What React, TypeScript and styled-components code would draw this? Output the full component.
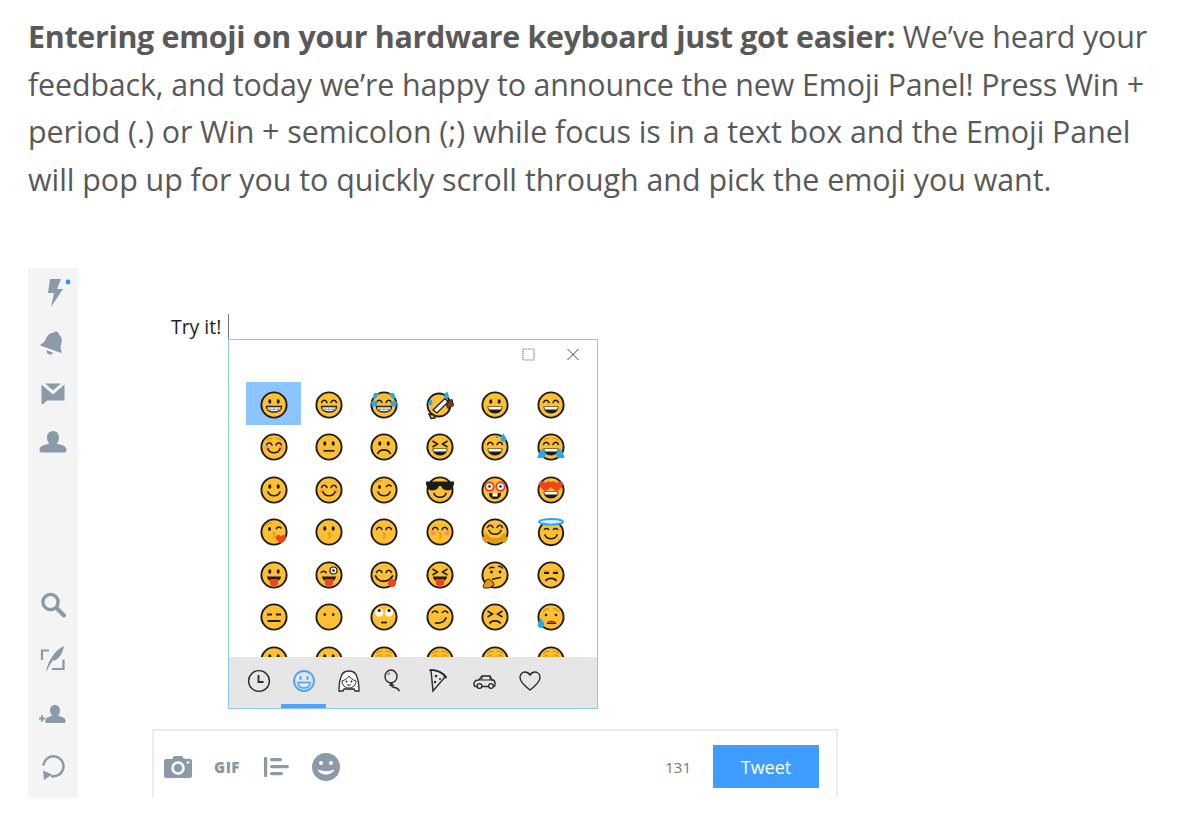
import React from "react";
import styled, { createGlobalStyle } from "styled-components";

const Global = createGlobalStyle`
  html, body { margin: 0; padding: 0; background: #fff; }
  body { font-family: "Open Sans", "Noto Sans", sans-serif; }
`;
const Page = styled.div`
  width: 1200px; height: 828px; overflow: hidden; box-sizing: border-box;
  padding: 13px 0 0 28px; background: #fff;
`;
const Intro = styled.p`
  margin: 0; font-size: 30.4px; line-height: 47.7px; color: #595959; white-space: nowrap;
`;
const Line = styled.span<{ $track: number }>`display: block; letter-spacing: ${(p) => p.$track}px;`;
const Lead = styled.strong`font-weight: 700; letter-spacing: -0.3px;`;
const Stage = styled.div`display: flex; margin-top: 64.2px; height: 530px;`;
const Rail = styled.nav`
  width: 50px; background: #f4f4f4; display: flex; flex-direction: column; padding-bottom: 4px; box-sizing: border-box;
`;
const RailGroup = styled.div`display: flex; flex-direction: column; &:last-child { margin-top: auto; }`;
const RailSlot = styled.div<{ $h: number }>`
  height: ${(p) => p.$h}px; display: flex; align-items: center; justify-content: center;
`;
const Main = styled.div`width: 686px; margin-left: 74px; display: flex; flex-direction: column;`;
const TryRow = styled.div`
  height: 71px; box-sizing: border-box; padding-top: 46px; display: flex; align-items: flex-start;
`;
const TryText = styled.span`
  width: 76px; box-sizing: border-box; padding: 0 0 0 19px; font-size: 19.4px; line-height: 26px; color: #222; white-space: nowrap;
`;
const Caret = styled.span`width: 1px; height: 26px; background: #777;`;
const Panel = styled.section`
  width: 370px; height: 370px; margin-left: 76px; box-sizing: border-box; border: 1px solid #8cc4ff;
  display: flex; flex-direction: column; background: #fff;
`;
const TitleBar = styled.div`
  height: 42px; flex: none; display: flex; justify-content: flex-end; align-items: flex-start; gap: 28px;
  padding: 8px 17px 0 0; box-sizing: border-box;
`;
const EmojiGrid = styled.div`
  flex: 1; overflow: hidden; padding-left: 17px; display: grid; grid-template-columns: repeat(6, 55.4px);
  grid-auto-rows: 42.5px; align-content: start;
`;
const Cell = styled.div<{ $on?: boolean }>`
  display: flex; align-items: center; justify-content: center; padding-top: 3px; box-sizing: border-box;
  background: ${(p) => (p.$on ? "#8cc4ff" : "transparent")};
`;
const TabBar = styled.div`
  height: 51px; flex: none; background: #e6e6e6; display: flex; padding-left: 7px;
`;
const Tab = styled.div<{ $on?: boolean }>`
  width: 45.2px; box-sizing: border-box; display: flex; justify-content: center; align-items: flex-start; padding-top: 12px;
  border-bottom: 4px solid ${(p) => (p.$on ? "#4da3ff" : "transparent")};
`;
const Composer = styled.div`
  margin-top: 20px; height: 68px; box-sizing: border-box; border: solid #e9edf1; border-width: 2px 2px 0 2px;
  padding: 14px 17px 0 9px; display: flex; align-items: flex-start;
`;
const Tools = styled.div`display: flex; align-items: center; height: 43px;`;
const ToolSlot = styled.div<{ $w: number }>`width: ${(p) => p.$w}px; display: flex; justify-content: center; align-items: center;`;
const Gif = styled.span`font-size: 15px; font-weight: 800; color: #8899a6; letter-spacing: .5px;`;
const Count = styled.span`margin-left: auto; font-size: 15px; line-height: 44px; color: #777; margin-right: 22px;`;
const TweetBtn = styled.button`
  width: 106px; height: 43px; border: 0; padding: 0; background: #3f9dff; color: #fff; font: 400 18px "Open Sans", sans-serif;
`;

const G = "#8a9aa8";
const Ic = ({ w = 28, h = 28, children, vb }: any) => (
  <svg width={w} height={h} viewBox={vb || `0 0 ${w} ${h}`} style={{ display: "block" }}>{children}</svg>
);

const Bolt = () => (
  <Ic w={50} h={40} vb="0 0 50 40">
    <path d="M22 6h11l-4 10h6L23 34l3-14h-6z" fill={G} />
    <circle cx="40" cy="9" r="2.4" fill="#2f8fff" />
  </Ic>
);
const Bell = () => (
  <Ic w={30} h={30}>
    <g fill={G} transform="rotate(20 15 15)">
      <path d="M15 3c1.6 0 2.400 1 2.600 2 3.800 1 5.400 4.600 5.400 8.400 0 3.400 1.600 5 3 6.600v1.600H4v-1.600c1.400-1.600 3-3.200 3-6.600 0-3.800 1.600-7.400 5.400-8.400.2-1 1-2 2.600-2z" />
      <path d="M11.500 24h7c-.4 2-1.800 3-3.500 3s-3.100-1-3.500-3z" />
    </g>
  </Ic>
);
const Mail = () => (
  <Ic w={26} h={24}>
    <path d="M1.500 3.500L13 13.500 24.500 3.500V19.500H7l-3.800 3.400-1.700.2z" fill={G} />
    <path d="M5 2.500h16l-8 6.800z" fill={G} />
  </Ic>
);
const Person = () => (
  <Ic w={30} h={28}>
    <path d="M15 2c3.600 0 6 2.800 6 6.600 0 2.600-1 4.800-2.400 6.200 3.600 1 8.600 1.600 9.600 4.400.6 1.600.2 4.300-1 4.300H2.800c-1.200 0-1.600-2.700-1-4.300 1-2.800 6-3.400 9.600-4.400C10 13.400 9 11.200 9 8.600 9 4.800 11.400 2 15 2z" fill={G} />
  </Ic>
);
const Search = () => (
  <Ic w={28} h={28}>
    <circle cx="11.500" cy="11" r="7.600" fill="none" stroke={G} strokeWidth="3.400" />
    <path d="M17.500 17l7.500 7.500" stroke={G} strokeWidth="4" strokeLinecap="round" />
  </Ic>
);
const Compose = () => (
  <Ic w={28} h={28}>
    <path d="M3 15V5.500h7M24.500 14.500V24H13" fill="none" stroke={G} strokeWidth="2.200" />
    <path d="M25 1c-1 7-5 13-10 15l-1-1-1 2-1 1-5 9C8 19 14 6 25 1z" fill={G} />
  </Ic>
);
const AddPerson = () => (
  <Ic w={30} h={24} vb="0 -4 30 24">
    <path d="M1 13.500h6M4 10.500v6" stroke={G} strokeWidth="2" />
    <path d="M17 0c3 0 5 2.300 5 5.500 0 2.300-.9 4-2.300 5.100 2.800.9 7.300 1.900 7.800 4.600.2 1-.2 2.800-.7 2.800H8c-.5 0-.9-1.800-.7-2.800.5-2.700 4.500-3.700 7.300-4.600C13.100 9.500 12 7.800 12 5.500 12 2.300 14 0 17 0z" fill={G} />
  </Ic>
);
const Refresh = () => (
  <Ic w={26} h={28}>
    <path d="M3.500 12.500A10 10 0 1 1 11 23" fill="none" stroke={G} strokeWidth="2.400" />
    <path d="M3 17.500l1 9.500 8-5.500z" fill={G} />
  </Ic>
);
const Camera = () => (
  <Ic w={30} h={24}>
    <path d="M3 4h6l2-3h8l2 2.800h6c1 0 2 1 2 2V21c0 1-1 2-2 2H3c-1 0-2-1-2-2V6c0-1 1-2 2-2z" fill={G} />
    <circle cx="15" cy="13" r="5.500" fill="none" stroke="#fff" strokeWidth="2.600" />
    <circle cx="25" cy="7.500" r="1.300" fill="#fff" />
  </Ic>
);
const Poll = () => (
  <Ic w={28} h={22}>
    <rect x="1" y="1" width="3.200" height="20" rx="1" fill={G} />
    <rect x="7" y="2" width="12" height="3.200" rx="1.600" fill={G} />
    <rect x="7" y="9" width="19" height="3.200" rx="1.600" fill={G} />
    <rect x="7" y="16" width="13" height="3.200" rx="1.600" fill={G} />
  </Ic>
);
const Smile = () => (
  <Ic w={30} h={30}>
    <circle cx="15" cy="15" r="14" fill={G} />
    <circle cx="10" cy="11" r="2" fill="#fff" />
    <circle cx="20" cy="11" r="2" fill="#fff" />
    <path d="M7 18c3 5.500 13 5.500 16 0-5 2-11 2-16 0z" fill="#fff" stroke="#fff" strokeWidth="1" />
  </Ic>
);

const K = "#1c1c1c", Y = "#ffbf33", D = "#e29a10", B = "#29aae8", R = "#f0441c";
const Face = ({ children, fill = Y }: any) => (
  <svg width={30} height={30} viewBox="0 0 30 30" style={{ display: "block" }}>
    <circle cx="15" cy="15" r="12.600" fill={fill} stroke={K} strokeWidth="1.900" />
    {children}
  </svg>
);
const Dots = ({ y = 11.500 }: any) => (<><ellipse cx="10.800" cy={y} rx="1.500" ry="2.300" fill={K} /><ellipse cx="19.200" cy={y} rx="1.500" ry="2.300" fill={K} /></>);
const SmallDots = () => (<><ellipse cx="10.800" cy="12.500" rx="1.200" ry="1.500" fill={K} /><ellipse cx="19.200" cy="12.500" rx="1.200" ry="1.500" fill={K} /></>);
const Arcs = ({ c = K, y = 12.500 }: any) => (
  <path d={`M7.500 ${y}c1-3 4.500-3 5.500 0M17 ${y}c1-3 4.500-3 5.500 0`} fill="none" stroke={c} strokeWidth="1.500" strokeLinecap="round" />
);
const Teeth = () => (
  <g>
    <path d="M7.500 16.500h15c0 3-2.500 5.500-7.500 5.500s-7.500-2.500-7.500-5.500z" fill="#fff" stroke={K} strokeWidth="1.300" />
    <path d="M8 19.300h14M11 16.500v5M15 16.500v5.500M19 16.500v5" stroke="#888" strokeWidth=".8" />
  </g>
);
const Open = () => (
  <g>
    <path d="M7.500 16.500h15c0 4-3 7-7.500 7s-7.500-3-7.500-7z" fill={K} />
    <path d="M8.300 17h13.400c0 1-.3 1.800-.7 2.500H9c-.4-.7-.7-1.500-.7-2.500z" fill="#fff" />
  </g>
);
const Smile2 = ({ y = 17 }: any) => <path d={`M9 ${y}c2 5 10 5 12 0`} fill="none" stroke={K} strokeWidth="1.700" strokeLinecap="round" />;
const Blush = () => (<><circle cx="8" cy="16" r="2.500" fill="#f7886a" opacity=".8" /><circle cx="22" cy="16" r="2.500" fill="#f7886a" opacity=".8" /></>);
const XEyes = () => <path d="M7.500 9l5 3-5 3M22.500 9l-5 3 5 3" fill="none" stroke={K} strokeWidth="1.500" />;
const Brows = () => <path d="M7.500 8.500c1.500-2 4-2.500 6-2M22.500 8.500c-1.500-2-4-2.500-6-2" fill="none" stroke={D} strokeWidth="1.400" />;
const Kiss = ({ c = D }: any) => <path d="M13.500 16c3-.5 3 2.200.8 2.500 2.500.3 2 3-.8 2.800" fill="none" stroke={c} strokeWidth="1.500" />;
const Tongue = () => (
  <g>
    <path d="M8 16.500h14c0 3-3 5-7 5s-7-2-7-5z" fill={K} />
    <path d="M11 19h8v4.500c0 4-8 4-8 0z" fill={R} />
  </g>
);
const Wink = () => (
  <g>
    <path d="M6 9c2-3 5-3.500 7-3" fill="none" stroke={D} strokeWidth="1.400" />
    <ellipse cx="10.500" cy="12" rx="1.400" ry="2" fill={K} />
    <path d="M17 12c1.500-2.500 4-2.500 5.500-.5" fill="none" stroke={K} strokeWidth="1.500" />
  </g>
);
const Heart = ({ x, y, s = 1 }: any) => (
  <path transform={`translate(${x} ${y}) scale(${s})`} d="M0-2c1-3 6-3 6 1 0 2.500-3.500 5-6 6.500C-2.500 4-6 1.500-6-1c0-4 5-4 6-1z" fill={R} />
);

const faces: React.ReactNode[] = [
  <Face><Dots /><Teeth /></Face>,
  <Face><Arcs /><Teeth /></Face>,
  <Face><Arcs /><Teeth /><path d="M5 3h5l-3 5.500H3.500zM25 3h-5l3 5.500h3.500z" fill={B} /><path d="M2 12c2-2 5-1.500 7 .5l-2 4H3zM28 12c-2-2-5-1.500-7 .5l2 4h4z" fill={B} /></Face>,
  <svg width={30} height={30} viewBox="0 0 30 30" style={{ display: "block" }}>
    <circle cx="14" cy="15" r="11.500" fill={Y} stroke={K} strokeWidth="1.800" />
    <path d="M4 24l5 1 1 3-4 .5z" fill={Y} stroke={K} strokeWidth="1.400" />
    <path d="M20 12l7-2.500 1.500 6-5.500 3z" fill="#8a3a10" stroke={K} strokeWidth="1" />
    <path d="M8 20L20 8.500l3 3.500-11 11z" fill="#fff" stroke={K} strokeWidth="1.300" />
    <path d="M19.500 8c-1-3 .5-5 2.500-6.500 1 2 2.500 3.500 1.500 5.500s-3 2-4 1zM3 14c0-2 1.500-3.500 3.500-4.500.5 2 1.500 3 .8 4.500S3.500 16 3 14z" fill={B} />
  </svg>,
  <Face><Dots /><Open /></Face>,
  <Face><Arcs /><Open /></Face>,

  <Face><Brows /><Arcs y={13} /><Blush /><Smile2 /></Face>,
  <Face><Dots /><path d="M9.500 18.800h11" stroke={K} strokeWidth="1.700" /></Face>,
  <Face><Dots /><path d="M8.500 22c2-5.500 11-5.500 13 0" fill="none" stroke={K} strokeWidth="1.700" /></Face>,
  <Face><XEyes /><Open /></Face>,
  <Face><Arcs /><Open /><path d="M23 1l3.500 5.500a3 3 0 1 1-6 .500c0-2 2-4 2.500-6z" fill={B} /><path d="M17 3l1.500 3h-3z" fill={B} /></Face>,
  <Face><Brows /><Arcs /><Open /><path d="M6 16l3.500 5c1 3-.5 5-3 5H1.500c0-4 3-6 4.500-10zM24 16l-3.500 5c-1 3 .5 5 3 5h5c0-4-3-6-4.500-10z" fill={B} /></Face>,

  <Face><Dots /><Smile2 /></Face>,
  <Face><Arcs /><Blush /><Smile2 /></Face>,
  <Face><Wink /><Smile2 /></Face>,
  <Face><path d="M1 6.500h28v3l-2 4.500c-2 2-8 2-10-1l-1-2h-2l-1 2c-2 3-8 3-10 1L1 9.500z" fill={K} /><Smile2 y={18.500} /></Face>,
  <Face>
    <circle cx="9.500" cy="11.500" r="4.200" fill="#fff" stroke={R} strokeWidth="2" /><circle cx="20.500" cy="11.500" r="4.200" fill="#fff" stroke={R} strokeWidth="2" />
    <circle cx="9.500" cy="11.500" r="1.300" fill={K} /><circle cx="20.500" cy="11.500" r="1.300" fill={K} />
    <path d="M9 18h12c0 4-2.500 6-6 6s-6-2-6-6z" fill={K} /><rect x="12.500" y="18" width="5" height="3.500" fill="#fff" />
  </Face>,
  <Face><Open /><Heart x={9.500} y={10.500} s={1.050} /><Heart x={20.500} y={10.500} s={1.050} /></Face>,

  <Face><Wink /><Kiss /><Heart x={22} y={21.500} s={.85} /></Face>,
  <Face><Dots /><Kiss /></Face>,
  <Face><Arcs /><Kiss /></Face>,
  <Face><Arcs /><Blush /><Kiss /></Face>,
  <Face><Arcs y={10.500} /><Smile2 y={13.500} /><path d="M2 22l4-6 5 5h8l5-5 4 6-3 4-5-2-2 2h-6l-2-2-5 2z" fill={D} /></Face>,
  <svg width={30} height={30} viewBox="0 0 30 30" style={{ display: "block" }}>
    <circle cx="15" cy="16" r="12.200" fill={Y} stroke={K} strokeWidth="1.900" />
    <path d="M8 10c1-2 4-2 5 0M17 10c1-2 4-2 5 0" transform="translate(0 3)" fill="none" stroke={K} strokeWidth="1.500" />
    <Smile2 y={18} />
    <ellipse cx="15" cy="4.800" rx="12" ry="2.800" fill="#d6f2ff" stroke={B} strokeWidth="1.900" />
  </svg>,

  <Face><Dots /><Tongue /></Face>,
  <Face><path d="M7 13c1-2.500 4-2.500 5.500 0" fill="none" stroke={K} strokeWidth="1.500" /><circle cx="19.500" cy="10.500" r="3.500" fill="#fff" stroke={K} strokeWidth="1.200" /><circle cx="19.500" cy="10.500" r="1.300" fill={K} /><Tongue /></Face>,
  <Face><Arcs /><path d="M6.500 16c3 7 13 7 17 0" fill="none" stroke={K} strokeWidth="1.800" strokeLinecap="round" /><circle cx="23" cy="23" r="4" fill={R} /></Face>,
  <Face><XEyes /><Tongue /></Face>,
  <svg width={30} height={30} viewBox="0 0 30 30" style={{ display: "block" }}>
    <circle cx="15" cy="15" r="12.600" fill={Y} stroke={K} strokeWidth="1.900" />
    <path d="M9 8.500c2-1.500 4-1.500 5.500-.5M18 6.500c2-.5 4 .5 5 2" fill="none" stroke={K} strokeWidth="1.500" />
    <circle cx="11.500" cy="12" r="1.400" fill={K} /><circle cx="20" cy="12" r="1.400" fill={K} />
    <path d="M12 19.500c3-.5 6-2 9-2" fill="none" stroke={K} strokeWidth="1.600" />
    <path d="M3 26l3-6 3-1 4 3 1 3-5 3H4z" fill={D} stroke={K} strokeWidth=".9" />
  </svg>,
  <Face><path d="M7.500 10.500l6 1.500M22.500 10.500l-6 1.500" stroke={D} strokeWidth="1.500" /><path d="M8 13h5M17 13h5" stroke={K} strokeWidth="1.800" /><path d="M9.500 21c2-3.500 9-3.500 11 0" fill="none" stroke={K} strokeWidth="1.700" /></Face>,

  <Face><path d="M8 12.500h5M17 12.500h5M8.500 19h13" stroke={K} strokeWidth="1.800" /></Face>,
  <Face><SmallDots /></Face>,
  <Face><circle cx="10.200" cy="10.500" r="4" fill="#fff" /><circle cx="20" cy="10.500" r="4" fill="#fff" /><circle cx="10.200" cy="8.500" r="1.600" fill={K} /><circle cx="20" cy="8.500" r="1.600" fill={K} /><path d="M12 20.500h6" stroke={K} strokeWidth="1.700" /></Face>,
  <Face><path d="M7 11c1-2 4-3 6 0M17 11c1-2 4-3 6 0" fill="none" stroke={K} strokeWidth="1.500" /><path d="M10.500 21c5 .5 9-1.500 10.500-5" fill="none" stroke={K} strokeWidth="1.700" strokeLinecap="round" /></Face>,
  <Face><XEyes /><path d="M9.500 21.500c2-3.500 9-3.500 11 0" fill="none" stroke={K} strokeWidth="1.700" /></Face>,
  <Face><path d="M7 9.500c2-2 4-3 6-3M23 9.500c-2-2-4-3-6-3" fill="none" stroke={D} strokeWidth="1.400" /><circle cx="10" cy="13" r="1.300" fill={K} /><circle cx="20" cy="13" r="1.300" fill={K} /><path d="M11 21c0-3 8-3 9 0v1H11z" fill={K} /><rect x="12" y="19.500" width="7" height="1.500" fill={R} /><path d="M5 16l3 5c1 3-1 5-3 5s-4-2-3-5z" fill={B} /></Face>,

  <Face><Dots /><Smile2 /></Face>,
  <Face><Dots /><Smile2 /></Face>,
  <Face><Brows /><Arcs c={D} /></Face>,
  <Face><Brows /><Arcs c={D} /></Face>,
  <Face><Brows /><Arcs c={D} /></Face>,
  <Face><Brows /><Arcs c={D} /></Face>,
];

const T = "#2a2a2a";
const tabStroke = { fill: "none", stroke: T, strokeWidth: 1.400 };
const tabs: React.ReactNode[] = [
  <Ic w={24} h={24}><circle cx="12" cy="12" r="10.400" {...tabStroke} /><path d="M11.500 6v7h5" {...tabStroke} strokeWidth={1.800} /></Ic>,
  <Ic w={24} h={24}><circle cx="12" cy="12" r="10" fill="none" stroke="#4da3ff" strokeWidth="1.800" /><ellipse cx="8.500" cy="9" rx="1.200" ry="2" fill="#4da3ff" /><ellipse cx="15.500" cy="9" rx="1.200" ry="2" fill="#4da3ff" /><path d="M6 13.500h12c0 3.500-2.500 5.500-6 5.500s-6-2-6-5.500z" fill="none" stroke="#4da3ff" strokeWidth="1.600" /></Ic>,
  <Ic w={24} h={24}><path d="M2 22c0-6 0-9 2-14 1-4 4-6 8-6s7 2 8 6c2 5 2 8 2 14h-4l-1-2H7l-1 2z" fill="#fff" stroke={T} strokeWidth="1.300" /><path d="M5 12c3-1 6-3 7-5 1 2 4 4 7 5 0 4-3 7-7 7s-7-3-7-7z" fill="#fff" stroke={T} strokeWidth="1" /><circle cx="9.500" cy="12.500" r="1" fill={T} /><circle cx="14.500" cy="12.500" r="1" fill={T} /><path d="M10 15.500c1 1 3 1 4 0" {...tabStroke} strokeWidth={1} /></Ic>,
  <Ic w={24} h={24}><ellipse cx="9" cy="7.500" rx="6" ry="6.500" {...tabStroke} /><path d="M9 14l-1 2h3zM9.500 16c0 3 3 2 5 3s2 2 3 3" {...tabStroke} /><path d="M6 6c0-1 1-2 2-2" {...tabStroke} strokeWidth={1} /></Ic>,
  <Ic w={24} h={24}><path d="M4 1c6 0 12 3 14 7L6 22z" {...tabStroke} /><path d="M3 2c-.5-1 .5-1.500 1-1 6 0 12 3 15 6.500.5 1 0 1.500-1 1.500" {...tabStroke} /><circle cx="9" cy="7" r="1.300" fill={T} /><circle cx="13" cy="10" r="1" fill={T} /><circle cx="8" cy="13" r="1.200" fill={T} /></Ic>,
  <Ic w={24} h={24}><path d="M1 15c0-3 2-4 5-4l3-4h8l2 4c2 0 3 1 3 3v2c0 1-.5 1.500-1.500 1.500h-18C1.500 17.500 1 16.500 1 15z" {...tabStroke} /><path d="M9 7v4M17 7v4M7 11h14" {...tabStroke} strokeWidth={1} /><circle cx="6.500" cy="17" r="2.400" fill="#e6e6e6" stroke={T} strokeWidth="1.300" /><circle cx="18" cy="17" r="2.400" fill="#e6e6e6" stroke={T} strokeWidth="1.300" /></Ic>,
  <Ic w={24} h={24}><path d="M12 21C8 18 2 13.500 2 8.500 2 5 4.500 3 7 3c2.500 0 4 1.500 5 3 1-1.500 2.500-3 5-3 2.500 0 5 2 5 5.500C22 13.500 16 18 12 21z" {...tabStroke} /></Ic>,
];

export default function App() {
  return (
    <Page>
      <Global />
      <Intro>
        <Line $track={-0.15}><Lead>Entering emoji on your hardware keyboard just got easier:</Lead> We’ve heard your</Line>
        <Line $track={-0.14}>feedback, and today we’re happy to announce the new Emoji Panel! Press Win +</Line>
        <Line $track={-0.06}>period (.) or Win + semicolon (;) while focus is in a text box and the Emoji Panel</Line>
        <Line $track={-0.03}>will pop up for you to quickly scroll through and pick the emoji you want.</Line>
      </Intro>
      <Stage>
        <Rail>
          <RailGroup>
            <RailSlot $h={50}><Bolt /></RailSlot>
            <RailSlot $h={50}><Bell /></RailSlot>
            <RailSlot $h={50}><Mail /></RailSlot>
            <RailSlot $h={50}><Person /></RailSlot>
          </RailGroup>
          <RailGroup>
            <RailSlot $h={54}><Search /></RailSlot>
            <RailSlot $h={54}><Compose /></RailSlot>
            <RailSlot $h={54}><AddPerson /></RailSlot>
            <RailSlot $h={54}><Refresh /></RailSlot>
          </RailGroup>
        </Rail>
        <Main>
          <TryRow>
            <TryText>Try it!</TryText>
            <Caret />
          </TryRow>
          <Panel>
            <TitleBar>
              <svg width="18" height="14" viewBox="0 0 18 14"><rect x="3" y="1" width="11" height="11" rx="1" fill="none" stroke="#777" strokeWidth="1.200" strokeDasharray="1.200 .8" /></svg>
              <svg width="14" height="14" viewBox="0 0 14 14"><path d="M1.500 1l11 11M12.500 1l-11 11" stroke="#444" strokeWidth="1" /></svg>
            </TitleBar>
            <EmojiGrid>
              {faces.map((f, i) => <Cell key={i} $on={i === 0}>{f}</Cell>)}
            </EmojiGrid>
            <TabBar>
              {tabs.map((t, i) => <Tab key={i} $on={i === 1}>{t}</Tab>)}
            </TabBar>
          </Panel>
          <Composer>
            <Tools>
              <ToolSlot $w={30}><Camera /></ToolSlot>
              <ToolSlot $w={68}><Gif>GIF</Gif></ToolSlot>
              <ToolSlot $w={32}><Poll /></ToolSlot>
              <ToolSlot $w={66}><Smile /></ToolSlot>
            </Tools>
            <Count>131</Count>
            <TweetBtn>Tweet</TweetBtn>
          </Composer>
        </Main>
      </Stage>
    </Page>
  );
}
